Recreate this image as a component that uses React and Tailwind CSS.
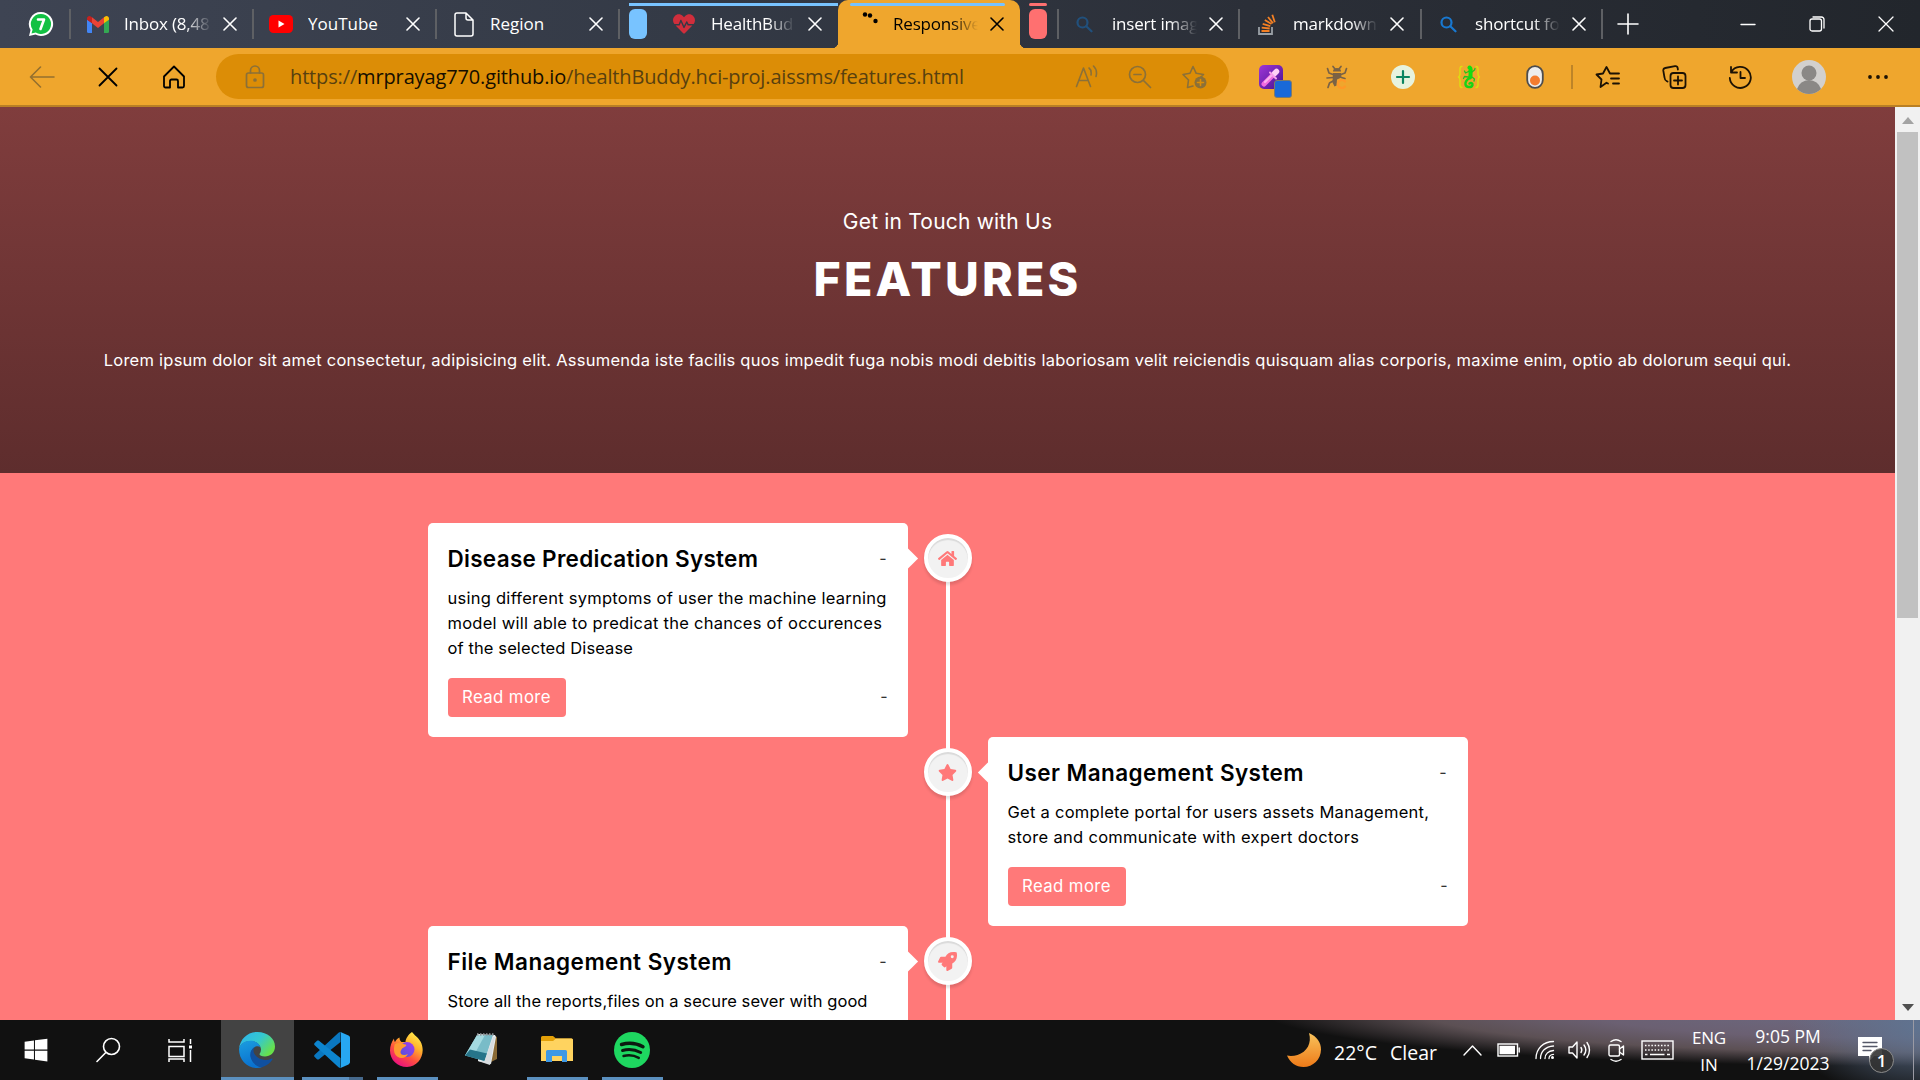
import React from "react";
import { FaHome, FaStar, FaRocket, FaHeartbeat, FaWindows } from "react-icons/fa";

const Svg = ({ w, h, vb, className = "", children, sw = 1.5 }) => (
  <svg
    width={w}
    height={h}
    viewBox={vb || `0 0 ${w} ${h}`}
    className={`shrink-0 ${className}`}
    fill="none"
    stroke="currentColor"
    strokeWidth={sw}
    strokeLinecap="round"
    strokeLinejoin="round"
  >
    {children}
  </svg>
);

/* ---------- tab strip ---------- */

const CloseIcon = ({ className = "" }) => (
  <Svg w={14} h={14} sw={1.6} className={className}>
    <path d="M1 1l12 12M13 1L1 13" />
  </Svg>
);

const WhatsApp = () => (
  <Svg w={26} h={26} className="ml-[28px]">
    <path d="M13 1a12 12 0 1 1-5.500 22.600L1 25l1.500-6A12 12 0 0 1 13 1z" fill="#fff" stroke="none" />
    <path d="M13 3a10 10 0 1 1-5.200 18.500L3.500 22.600l1.100-4A10 10 0 0 1 13 3z" fill="#12c143" stroke="none" />
    <path d="M10 8.500h6L12.500 18" stroke="#fff" strokeWidth="2.600" />
  </Svg>
);

const Gmail = () => (
  <Svg w={22} h={17} vb="0 0 22 17">
    <g stroke="none">
      <path d="M0 3.500L5 7v10H1.500A1.500 1.500 0 0 1 0 15.500z" fill="#4285f4" />
      <path d="M22 3.500L17 7v10h3.500a1.500 1.500 0 0 0 1.500-1.500z" fill="#34a853" />
      <path d="M5 1.300l6 4.700 6-4.700v6L11 12 5 7.300z" fill="#ea4335" />
      <path d="M0 2.500C0 .3 2.500-.7 4.200.7L5 1.300v6L0 3.700z" fill="#c5221f" />
      <path d="M22 2.500c0-2.200-2.500-3.200-4.200-1.800l-.8.6v6l5-3.600z" fill="#fbbc04" />
    </g>
  </Svg>
);

const YouTube = () => (
  <Svg w={24} h={18}>
    <rect width="24" height="18" rx="4.500" fill="#f00" stroke="none" />
    <path d="M9.500 5.500v7l6-3.500z" fill="#fff" stroke="none" />
  </Svg>
);

const FileIcon = () => (
  <Svg w={20} h={25} className="text-white">
    <path d="M3 1h9l7 7v14a2 2 0 0 1-2 2H3a2 2 0 0 1-2-2V3a2 2 0 0 1 2-2zM12 1v5a2 2 0 0 0 2 2h5" />
  </Svg>
);

const BingSearch = ({ className }) => (
  <Svg w={17} h={17} sw={2.2} className={className}>
    <circle cx="6.500" cy="6.500" r="5" />
    <path d="M10.300 10.300l5.200 5" />
  </Svg>
);

const StackOverflow = () => (
  <Svg w={18} h={21} vb="0 0 18 21">
    <path d="M1 13v7h13v-7" stroke="#9aa0a6" strokeWidth="1.800" strokeLinecap="butt" strokeLinejoin="miter" />
    <path d="M3.500 17h8M3.700 13.600l8 .9M4.700 9.900l7.600 2.300M6.800 6l6.700 4M10 3l5 6.200M14.300.8l2.500 7.500" stroke="#f48024" strokeWidth="1.800" strokeLinecap="butt" />
  </Svg>
);

const TabLabel = ({ children, className }) => (
  <span className={`overflow-hidden whitespace-nowrap text-[17px] leading-[24px] ${className}`}>{children}</span>
);
const fade = "tracking-[-0.2px] [mask-image:linear-gradient(to_right,#000_68%,transparent)]";

const TabStrip = () => (
  <div className="flex h-[48px] w-full shrink-0 items-center bg-[linear-gradient(to_right,#3e4453,#343a46_35%,#2b2f38_65%,#22262c)] text-white">
    <div className="flex h-[30px] w-[71px] items-center border-r-2 border-[#5e6064]"><WhatsApp /></div>
    <div className="flex h-[30px] w-[183px] items-center border-r-2 border-[#5e6064] pl-[16px]">
      <Gmail />
      <TabLabel className={`ml-[15px] w-[88px] ${fade}`}>Inbox (8,48</TabLabel>
      <CloseIcon className="ml-[11px]" />
    </div>
    <div className="flex h-[30px] w-[183px] items-center border-r-2 border-[#5e6064] pl-[15px]">
      <YouTube />
      <TabLabel className="ml-[15px] w-[86px]">YouTube</TabLabel>
      <CloseIcon className="ml-[12px]" />
    </div>
    <div className="flex h-[30px] w-[183px] items-center border-r-2 border-[#5e6064] pl-[17px]">
      <FileIcon />
      <TabLabel className="ml-[16px] w-[87px]">Region</TabLabel>
      <CloseIcon className="ml-[12px]" />
    </div>
    <div className="flex h-[48px] w-[218px] flex-col pl-[9px] pt-[3px]">
      <div className="h-[3px] bg-[#78c3ff]" />
      <div className="mt-[3px] flex h-[30px] items-center">
        <div className="h-[30px] w-[18px] rounded-[6px] bg-[#78c3ff]" />
        <FaHeartbeat className="ml-[26px] size-[22px] shrink-0 text-[#d02e3c]" />
        <TabLabel className={`ml-[16px] w-[84px] ${fade}`}>HealthBud</TabLabel>
        <CloseIcon className="ml-[13px]" />
      </div>
    </div>
    <div className="relative flex h-[48px] w-[182px] flex-col rounded-t-[10px] bg-[#efa62d] pt-[3px] text-black">
      <div className="absolute -left-[6px] bottom-0 size-[6px] bg-[radial-gradient(circle_at_0_0,transparent_6px,#efa62d_6.500px)]" />
      <div className="absolute -right-[6px] bottom-0 size-[6px] bg-[radial-gradient(circle_at_100%_0,transparent_6px,#efa62d_6.500px)]" />
      <div className="ml-[12px] h-[3px] w-[155px] rounded-full bg-[#78c3ff]" />
      <div className="mt-[3px] flex h-[30px] items-center pl-[24px]">
        <Svg w={17} h={24} className="text-black">
          <g fill="currentColor" stroke="none"><circle cx="3" cy="2.500" r="2.200" /><circle cx="8" cy="3.500" r="2.200" /><circle cx="13.500" cy="9" r="2.200" /></g>
        </Svg>
        <TabLabel className={`ml-[14px] w-[85px] ${fade}`}>Responsive</TabLabel>
        <CloseIcon className="ml-[12px]" />
      </div>
    </div>
    <div className="flex h-[48px] w-[37px] flex-col pl-[9px] pt-[3px]">
      <div className="h-[3px] w-[18px] rounded-full bg-[#ff7070]" />
      <div className="mt-[3px] h-[30px] w-[18px] rounded-[6px] bg-[#ff7070]" />
    </div>
    <div className="flex h-[30px] w-[181px] items-center border-l-2 border-[#5e6064] pl-[17px]">
      <BingSearch className="text-[#21507c]" />
      <TabLabel className={`ml-[19px] w-[85px] ${fade}`}>insert imag</TabLabel>
      <CloseIcon className="ml-[12px]" />
    </div>
    <div className="flex h-[30px] w-[182px] items-center border-l-2 border-[#5e6064] pl-[18px]">
      <StackOverflow />
      <TabLabel className={`ml-[17px] w-[85px] ${fade}`}>markdown</TabLabel>
      <CloseIcon className="ml-[12px]" />
    </div>
    <div className="flex h-[30px] w-[183px] items-center border-x-2 border-[#5e6064] pl-[18px]">
      <BingSearch className="text-[#1878d0]" />
      <TabLabel className={`ml-[18px] w-[85px] ${fade}`}>shortcut fo</TabLabel>
      <CloseIcon className="ml-[12px]" />
    </div>
    <Svg w={22} h={22} sw={1.6} className="ml-[14px]"><path d="M11 1v20M1 11h20" /></Svg>
    <Svg w={16} h={16} sw={1.4} className="ml-[101px]"><path d="M1 8.500h14" /></Svg>
    <Svg w={16} h={16} sw={1.3} className="ml-[53px]"><rect x="1" y="3" width="11.500" height="12" rx="2" /><path d="M4 1h8.500a2.500 2.500 0 0 1 2.500 2.500V12" /></Svg>
    <Svg w={16} h={16} sw={1.3} className="ml-[53px]"><path d="M1 1l14 14M15 1L1 15" /></Svg>
  </div>
);

/* ---------- toolbar ---------- */

const Toolbar = () => (
  <div className="flex h-[59px] w-full shrink-0 items-center border-b-2 border-[#b97f25] bg-[#efa62d] text-[#1c1204]">
    <Svg w={26} h={22} sw={1.6} className="ml-[29px] text-[#94702f]"><path d="M25 11H1.500M11.500 1L1.500 11l10 10" /></Svg>
    <Svg w={20} h={20} sw={1.8} className="ml-[43px] text-black"><path d="M1.500 1.500l17 17M18.500 1.500l-17 17" /></Svg>
    <Svg w={24} h={24} sw={1.8} className="ml-[44px] text-black">
      <path d="M2 11.500L12 1.500l10 10V21a1.500 1.500 0 0 1-1.500 1.500H16V16a1.500 1.500 0 0 0-1.500-1.500h-5A1.500 1.500 0 0 0 8 16v6.500H3.500A1.500 1.500 0 0 1 2 21z" />
    </Svg>
    <div className="ml-[30px] flex h-[45px] w-[1013px] items-center rounded-full bg-[#dc8d06] text-[#8b7038]">
      <Svg w={20} h={24} sw={1.7} className="ml-[29px]">
        <rect x="1.500" y="8" width="17" height="14.500" rx="2" /><path d="M5.500 8V5.500a4.500 4.500 0 0 1 9 0V8" /><circle cx="10" cy="15" r="1" fill="currentColor" />
      </Svg>
      <span className="ml-[25px] w-[679px] whitespace-nowrap text-[20px] tracking-[-0.14px] text-[#58400f]">
        https://<span className="text-[#150d00]">mrprayag770.github.io</span>/healthBuddy.hci-proj.aissms/features.html
      </span>
      <Svg w={23} h={24} sw={1.6} className="ml-[106px]">
        <path d="M1.500 21.500L8.500 3l7 18.500M4 15.500h9M14 3c2 1.500 2.500 4 2 7M18.500 1c3 3 3.500 7 2.500 10.500" />
      </Svg>
      <Svg w={24} h={24} sw={1.7} className="ml-[30px]"><circle cx="9.500" cy="9.500" r="8" /><path d="M15.500 15.500l7 7M6 9.500h7" /></Svg>
      <Svg w={27} h={26} sw={1.6} className="ml-[29px]">
        <path d="M12 22l-5.500 1.500 1-7.500L2 10.500l7-1.200L12 2.500l3.200 6.800 7.300 1.200-3 3" />
        <circle cx="19.500" cy="18.500" r="6" fill="currentColor" stroke="none" /><path d="M19.500 15.500v6M16.500 18.500h6" stroke="#dc8d06" />
      </Svg>
    </div>
    <div className="relative ml-[30px] size-[24px] rounded-[5px] bg-linear-to-br from-[#a035d8] to-[#4a1090]">
      <Svg w={24} h={24}><path d="M5 19l9-9" stroke="#f06be0" strokeWidth="5" /><path d="M6 17l8-8" stroke="#f9b3ee" strokeWidth="2" /><path d="M15.500 8.500l2-2" stroke="#ffd0f6" strokeWidth="5.500" /><path d="M11 7.500l6 6" stroke="#f7a0ec" strokeWidth="2" /></Svg>
      <div className="absolute left-[15px] top-[15px] size-[18px] rounded-[3px] border border-[#7d7a6a] bg-[#1a69d8]" />
    </div>
    <Svg w={22} h={24} sw={1.7} className="ml-[43px] text-[#7a6245]">
      <path d="M7 1.500l2 2.500M15 1.500l-2 2.500" />
      <path d="M7 6.500a4 3.500 0 0 1 8 0z" fill="currentColor" stroke="none" />
      <path d="M7 8h8l.5 4.500-4.500 2-.5 6-2 1-2-4z" fill="currentColor" stroke="none" />
      <path d="M7 9.500L3 8 1.500 3.500M15 9.500L19 8l1.500-4.500M7 12.500l-6 .5M15.500 12.500l3.500 1M7 16l-3.500 2L2 22.500" />
      <path d="M19 16.500a4 4 0 1 0 0 5" stroke="#ff9827" strokeWidth="2.200" />
    </Svg>
    <Svg w={24} h={24} className="ml-[43px]"><circle cx="12" cy="12" r="12" fill="#e7f3de" stroke="none" /><path d="M12 6v12M6 12h12" stroke="#0c8560" strokeWidth="2.200" /></Svg>
    <Svg w={24} h={24} className="ml-[42px]">
      <path d="M5 1.500C3.500 1.500 3 2.500 3 4v5c0 2-.5 2.500-1.500 3C2.500 12.500 3 13 3 15v5c0 1.500.5 2.500 2 2.500M19 1.500c1.500 0 2 1 2 2.500v5c0 2 .5 2.500 1.500 3-1 .5-1.500 1-1.500 3v5c0 1.500-.5 2.500-2 2.500" stroke="#dede10" strokeWidth="1.400" />
      <path d="M12.500 2.500c0 0 1.500 1 1 3" stroke="#10e010" strokeWidth="4" />
      <path d="M13.500 6.500c0 2.500.5 3.500-.5 6" stroke="#10e010" strokeWidth="4" />
      <path d="M12.500 13c-3 2-4.500 4-4 6.500.5 3 6 3.500 7 .5.300-1.800-1.500-2.500-3-1.500" stroke="#16d416" strokeWidth="2.400" />
      <path d="M11.500 6.500L8.500 8 7.500 6M15 7l2.500-2 .5-1.500M11 12l-3.500-.5-1 2M15 12l2.500 2-.500 2" stroke="#22c51c" strokeWidth="1.300" />
    </Svg>
    <Svg w={18} h={24} className="ml-[45px]"><rect x="1.200" y="1.200" width="15.600" height="21.600" rx="7.800" fill="#ededed" stroke="#4d4d4d" strokeWidth="1.800" /><circle cx="9" cy="15.500" r="5" fill="#f47c2e" stroke="none" /></Svg>
    <div className="ml-[27px] h-[24px] w-[2px] bg-[#bd8428]" />
    <Svg w={25} h={24} sw={1.8} className="ml-[22px]">
      <path d="M13 18.500l-1.500-.8-6 4.300 1-7.500L1.500 9.500 8 8.500l3.500-6.500L15 8.500h9M16 13.500h8M18 18.500h6" />
    </Svg>
    <Svg w={25} h={24} sw={1.8} className="ml-[42px]">
      <rect x="8.500" y="8" width="15" height="15" rx="3" /><path d="M16 11.500v8M12 15.500h8" /><path d="M5.500 16.500l-1-.5C3 15.500 2.700 14 2.500 12.500L1.300 5.700c-.2-1.400.5-2.400 1.900-2.700L13 1.200c1.400-.2 2.500.7 2.700 2l.2 1.300" />
    </Svg>
    <Svg w={25} h={24} sw={1.8} className="ml-[41px]">
      <path d="M3 2v5.500h6M3.300 7A10.500 10.500 0 1 1 1.800 13" /><path d="M12.500 7v6H17" />
    </Svg>
    <Svg w={34} h={34} className="ml-[39px]">
      <circle cx="17" cy="17" r="17" fill="#d2d0ce" stroke="none" /><circle cx="17" cy="13" r="7.500" fill="#8a8886" stroke="none" /><path d="M5 29a12.500 12.500 0 0 1 24 0 17 17 0 0 1-24 0z" fill="#8a8886" stroke="none" />
    </Svg>
    <Svg w={22} h={6} className="ml-[41px]"><g fill="#1c1204" stroke="none"><circle cx="3" cy="3" r="1.900" /><circle cx="11" cy="3" r="1.900" /><circle cx="19" cy="3" r="1.900" /></g></Svg>
  </div>
);

/* ---------- web page ---------- */

const Badge = ({ Icon }) => (
  <div className="z-10 flex size-[48px] items-center justify-center rounded-full border-4 border-white bg-[#f2f2f2] text-[19px] text-[#ff7979] shadow-[0_3px_3px_rgba(0,0,0,0.12),inset_0_2px_1px_rgba(0,0,0,0.10)]">
    <Icon />
  </div>
);

const Card = ({ title, lines, right, titleClass }) => (
  <div className="relative w-[480px] rounded-[5px] bg-white p-[20px] text-black">
    <div className={`absolute top-[28px] size-[15px] rotate-45 bg-white ${right ? "-left-[7px]" : "-right-[7px]"}`} />
    <div className="flex h-[33px] items-center justify-between">
      <h2 className={`pb-[2px] text-[22.500px] font-semibold leading-[31px] ${titleClass}`}>{title}</h2>
      <span className="pb-[2px] pr-px text-[16px] leading-[31px] text-[#333]">-</span>
    </div>
    <p className="mt-[10px] text-[16.500px] leading-[25px]">
      {lines.map(([text, cls]) => (
        <span key={text} className={`block whitespace-nowrap ${cls}`}>{text}</span>
      ))}
    </p>
    <div className="mt-[17px] flex h-[39px] items-center justify-between">
      <a className="flex h-[39px] w-[118px] items-center justify-center rounded-[4px] bg-[#ff7979] text-[16.750px] leading-[25px] tracking-[0.380px] text-white">Read more</a>
      <span className="pb-[3px] text-[16px] text-[#333]">-</span>
    </div>
  </div>
);

const Row = ({ first, right, Icon, ...card }) => (
  <div className={`flex w-[1040px] ${right ? "flex-row-reverse" : ""}`}>
    <Card right={right} {...card} />
    <div className="relative flex w-[80px] flex-col items-center pt-[11px]">
      <div className={`absolute bottom-0 left-[38px] w-[4px] bg-white ${first ? "top-[30px]" : "top-0"}`} />
      <Badge Icon={Icon} />
    </div>
  </div>
);

const Page = () => (
  <div className="h-[913px] w-[1895px] overflow-hidden bg-[#ff7979] font-['Inter',sans-serif]">
    <header className="flex h-[366px] flex-col items-center bg-linear-to-b from-[#803d3d] to-[#5e2d2d] pt-[100px] text-center text-white">
      <p className="text-[21px] leading-[30px] tracking-[0.190px]">Get in Touch with Us</p>
      <h1 className="mt-[12px] text-[46.500px] font-extrabold leading-[60px] tracking-[3.200px]">FEATURES</h1>
      <p className="mt-[39px] whitespace-nowrap text-[16.500px] leading-[24px] tracking-[0.245px]">
        Lorem ipsum dolor sit amet consectetur, adipisicing elit. Assumenda iste facilis quos impedit fuga nobis modi debitis laboriosam velit reiciendis quisquam alias corporis, maxime enim, optio ab dolorum sequi qui.
      </p>
    </header>
    <main className="flex flex-col items-center pt-[50px]">
      <Row
        first
        Icon={FaHome}
        title="Disease Predication System"
        titleClass="tracking-[0.290px]"
        lines={[
          ["using different symptoms of user the machine learning", "tracking-[0.257px]"],
          ["model will able to predicat the chances of occurences", "tracking-[0.255px]"],
          ["of the selected Disease", "tracking-[0.110px]"],
        ]}
      />
      <Row
        right
        Icon={FaStar}
        title="User Management System"
        titleClass="tracking-[0.430px]"
        lines={[
          ["Get a complete portal for users assets Management,", "tracking-[0.265px]"],
          ["store and communicate with expert doctors", "tracking-[0.310px]"],
        ]}
      />
      <Row
        Icon={FaRocket}
        title="File Management System"
        titleClass="tracking-[0.470px]"
        lines={[["Store all the reports,files on a secure sever with good", "tracking-[0.080px]"]]}
      />
    </main>
  </div>
);

const Scrollbar = () => (
  <div className="flex h-[913px] w-[25px] flex-col items-center bg-[#f1f1f1]">
    <Svg w={12} h={7} className="mt-[10px]"><path d="M6 0l6 7H0z" fill="#a3a3a3" stroke="none" /></Svg>
    <div className="mt-[8px] h-[486px] w-[21px] bg-[#c1c1c1]" />
    <Svg w={12} h={7} className="mb-[9px] mt-auto"><path d="M6 7l6-7H0z" fill="#505050" stroke="none" /></Svg>
  </div>
);

/* ---------- taskbar ---------- */

const Edge = () => (
  <Svg w={36} h={36} vb="0 0 36 36">
    <defs>
      <linearGradient id="edgeTop" x1="0" y1="0" x2="1" y2="0.600"><stop offset="0" stopColor="#2cb2f0" /><stop offset="0.550" stopColor="#35c8cf" /><stop offset="1" stopColor="#68e04a" /></linearGradient>
      <linearGradient id="edgeLow" x1="0" y1="0" x2="0.300" y2="1"><stop offset="0" stopColor="#1b9de0" /><stop offset="1" stopColor="#0a72cf" /></linearGradient>
    </defs>
    <g stroke="none">
      <path d="M0 17C1 7 8.500 0 18.500 0 28.500 0 36 6.500 36 14.500 36 21 31 24.500 26 24.500c-3.500 0-5.500-1-5.500-2.200 0-1 1.500-1.800 1.500-4.800C22 13 17 9 11.500 9 5 9 1 13 0 17z" fill="url(#edgeTop)" />
      <path d="M0 17C1 12 5.500 8.800 11.500 8.800c5 0 9 3 10 6.200-5-2.500-9.500 2-9.500 7 0 7 5 12.500 11 13.200-1.500.500-3.200.8-5 .8C8 36 0 28 0 17z" fill="url(#edgeLow)" />
      <path d="M16.500 14.800C12 17 10.500 21 11.500 25c1.500 6 6.500 10 11.500 10.200 5-1.500 8.500-4.700 10.500-8 .3-.6-.2-1-.8-.7-2 1-4 1.500-6 1.500-7 0-12-5-12.200-9 0-1.800.8-3.200 2-4.200z" fill="#10509f" />
    </g>
  </Svg>
);

const VSCode = () => (
  <Svg w={36} h={36} vb="0 0 36 36">
    <g stroke="none">
      <path d="M26.500 0v10L5 27.200c-.6.500-1.400.4-2 0L.7 25c-.7-.6-.7-1.500 0-2.200L24.500.8c.6-.5 1.300-.8 2-.8z" fill="#0a77c0" />
      <path d="M26.500 36V26L5 8.800c-.6-.5-1.400-.4-2 0L.7 11c-.7.600-.7 1.500 0 2.200l23.800 22c.6.500 1.300.8 2 .8z" fill="#0d85cf" />
      <path d="M26.500 0l8 3.600c1 .5 1.500 1.300 1.500 2.300v24.200c0 1-.5 1.800-1.500 2.300l-8 3.600c.5-.5.500-1 .5-2V2c0-1-.2-1.500-.5-2z" fill="#27a7f2" />
    </g>
  </Svg>
);

const Firefox = () => (
  <Svg w={34} h={35} vb="0 0 34 35">
    <defs>
      <linearGradient id="fox" x1="0.850" y1="0" x2="0.250" y2="1"><stop offset="0" stopColor="#fff44f" /><stop offset="0.350" stopColor="#ffb22c" /><stop offset="0.650" stopColor="#ff4f40" /><stop offset="1" stopColor="#e90a86" /></linearGradient>
      <linearGradient id="globe" x1="1" y1="0" x2="0" y2="1"><stop offset="0" stopColor="#a63af0" /><stop offset="1" stopColor="#4a55dc" /></linearGradient>
    </defs>
    <g stroke="none">
      <path d="M22 0c2 3 6 5 8.500 9.500 6 11-1 25.500-13.500 25.500C7.500 35 0 28 0 18.500 0 14 1.500 10 4 6.500c0 2 .5 3 1 3.500C6 8 7.500 6 9.500 5.500c0 2 .5 3 2 4.500h4c0-3 3-8 6.500-10z" fill="url(#fox)" />
      <circle cx="17" cy="17.500" r="7.500" fill="url(#globe)" />
      <path d="M5 12c4-2 7-.5 10 .5 1 0 1.800.6 1 1.500-2 1.800-4 2-4.500 3.500C8 23 14 24 18 22c-3 6-11 5-13.500-1C3.500 18 4 14 5 12z" fill="#ff9a30" />
    </g>
  </Svg>
);

const Notepad = () => (
  <Svg w={33} h={33} vb="0 0 33 33">
    <g stroke="none">
      <path d="M30 3l2 1v22l-6 3z" fill="#8a6a35" />
      <path d="M13 1l17 1 1 2-5 27-13-3z" fill="#e9eef0" />
      <path d="M12 2h16L19.500 28 0 22.500z" fill="#79bcc8" />
      <path d="M12 2h8L9 22l-9 .5z" fill="#a4dae0" />
      <path d="M0 22.500l5-6 17 4-2.500 7.500z" fill="#27758a" />
      <path d="M19.500 28L28 4l2 0-5 28-12-4z" fill="#d8dde0" />
    </g>
    <path d="M12 1.500h18" stroke="#8e969a" strokeDasharray="1.500 1.500" strokeWidth="2.500" strokeLinecap="butt" />
  </Svg>
);

const Folder = () => (
  <Svg w={32} h={28} vb="0 0 32 28">
    <g stroke="none">
      <path d="M0 1.500A1.500 1.500 0 0 1 1.500 0H12l3 2.500h15.500A1.500 1.500 0 0 1 32 4v6H0z" fill="#e3a008" />
      <path d="M0 5h12l3-2.500h15.500A1.500 1.500 0 0 1 32 4v21H0z" fill="#ffd35f" />
      <path d="M5 26V15.500A1.500 1.500 0 0 1 6.500 14h18a1.500 1.500 0 0 1 1.500 1.500V26h-5v-6H11v6z" fill="#3e98e4" />
    </g>
  </Svg>
);

const Spotify = () => (
  <Svg w={36} h={36} vb="0 0 36 36">
    <circle cx="18" cy="18" r="18" fill="#1ed760" stroke="none" />
    <g stroke="#0c1a10">
      <path d="M7.500 12.500c7-2 15-1.300 21.500 2.200" strokeWidth="3.400" />
      <path d="M8.500 18.500c6-1.700 12.500-1 18.200 2.100" strokeWidth="2.900" />
      <path d="M9.500 24c5-1.300 10.500-.8 15.300 1.900" strokeWidth="2.400" />
    </g>
  </Svg>
);

const TaskApp = ({ children, tile = "", bar = "bg-[#5b90bf]" }) => (
  <div className={`flex h-[60px] flex-col items-center justify-between ${tile}`}>
    <div className="flex h-[57px] items-center pr-[2px] pt-[2px]">{children}</div>
    <div className={`h-[3px] w-full ${bar}`} />
  </div>
);

const Taskbar = () => (
  <div className="flex h-[60px] w-full shrink-0 items-center bg-[#111] bg-[radial-gradient(ellipse_130px_75px_at_1920px_6px,#5f7390_0%,transparent_100%),radial-gradient(ellipse_640px_56px_at_1900px_-10px,#6c6b84_0%,#6b6072_50%,#5c5054_75%,#11111100_100%)] text-white">
    <FaWindows className="ml-[23px] size-[26px] shrink-0" />
    <Svg w={25} h={26} sw={1.6} className="ml-[47px]"><circle cx="15.500" cy="9.500" r="8" /><path d="M9.800 15.500L1 24.500" /></Svg>
    <Svg w={25} h={25} sw={1.5} className="ml-[47px]">
      <path d="M1 1v3h15V1M1 8.500h15v10H1zM1 24v-3h15v3M22.500 1v5M22.500 12v12" strokeLinecap="butt" strokeLinejoin="miter" /><rect x="21" y="7.500" width="3" height="3" fill="#fff" stroke="none" />
    </Svg>
    <div className="ml-[28px] flex">
      <TaskApp tile="w-[73px] bg-[#434343]"><Edge /></TaskApp>
      <TaskApp tile="ml-[8px] w-[61px]" bar="bg-[linear-gradient(to_right,#5b90bf_47px,#46698c_47px)]"><VSCode /></TaskApp>
      <TaskApp tile="ml-[14px] w-[61px]"><Firefox /></TaskApp>
      <TaskApp tile="ml-[14px] w-[61px]" bar=""><Notepad /></TaskApp>
      <TaskApp tile="ml-[14px] w-[61px]"><Folder /></TaskApp>
      <TaskApp tile="ml-[14px] w-[61px]"><Spotify /></TaskApp>
    </div>
    <Svg w={34} h={34} className="ml-[624px]">
      <defs><linearGradient id="moon" x1="0" y1="0" x2="0" y2="1"><stop offset="0" stopColor="#f8c35c" /><stop offset="1" stopColor="#ee7a18" /></linearGradient></defs>
      <path d="M22 0c8 3.500 12 9.500 12 16.500C34 26.500 26 34 16.500 34 9 34 3 29.500 0 22.500c3 .8 7 .5 10.500-.5C20 19 25 10 22 0z" fill="url(#moon)" stroke="none" />
    </Svg>
    <span className="ml-[13px] w-[56px] pt-[5px] text-[19.500px]">22°C</span>
    <span className="w-[60px] pt-[5px] text-[19.500px]">Clear</span>
    <Svg w={19} h={11} sw={1.4} className="ml-[13px]"><path d="M1 10l8.500-9L18 10" /></Svg>
    <Svg w={23} h={14} sw={1.4} className="ml-[15px]"><rect x="1" y="1" width="19.500" height="12" strokeLinejoin="miter" /><rect x="2.500" y="2.800" width="15.500" height="8.500" fill="#fff" stroke="none" /><path d="M22.200 5v4" /></Svg>
    <Svg w={20} h={20} sw={1.3} className="ml-[15px]"><path d="M1 18.500C1 8.500 8.500 1.500 18.500 1.500M5.500 18.500c0-7 5-12 13-12.500M10 18.500c0-4.500 3.500-7.500 8.500-8M14 18.500c0-2.500 2-4 4.500-4.200" /><circle cx="17.500" cy="17.500" r="1.500" fill="#fff" stroke="none" /></Svg>
    <Svg w={23} h={20} sw={1.4} className="ml-[13px]"><path d="M1 7h3.500L9 2v16l-4.500-5H1zM13 7.500c1 1.500 1 3.500 0 5M16 5c2.200 3 2.200 7 0 10M19 2.500c3.300 4.500 3.300 10.500 0 15" /></Svg>
    <Svg w={17} h={23} sw={1.4} className="ml-[17px]"><rect x="1" y="6" width="10.500" height="11" rx="1.500" /><path d="M11.500 10l4-3v9l-4-3M3 2.500c3-2 7-2 10 0M3 20.500c3 2 7 2 10 0" /></Svg>
    <Svg w={33} h={20} sw={1.4} className="ml-[16px]"><rect x="1" y="1" width="31" height="18" strokeLinejoin="miter" /><path d="M4 5.500h25M4 10h25" strokeDasharray="1.500 1.700" strokeLinecap="butt" /><path d="M4 14.500h2.500M9 14.500h14.500M26 14.500h3" strokeLinecap="butt" /></Svg>
    <div className="ml-[14px] flex w-[42px] flex-col items-center pt-px text-[17px] leading-[27px]"><span className="tracking-[-0.150px]">ENG</span><span>IN</span></div>
    <div className="ml-[13px] flex w-[90px] flex-col items-center whitespace-nowrap text-[17.500px] leading-[27px]"><span>9:05 PM</span><span>1/29/2023</span></div>
    <div className="relative ml-[25px] h-[26px] w-[24px]">
      <Svg w={24} h={26}><path d="M0 0h24v19h-8l-5 6v-6H0z" fill="#fff" stroke="none" /><path d="M5 5.500h14M5 9.500h14M5 13.500h8" stroke="#555868" strokeWidth="1.300" /></Svg>
      <div className="absolute left-[11px] top-[11px] flex size-[25px] items-center justify-center rounded-full border border-[#8c8c8c] bg-[#333]/90 text-[17px] font-semibold">1</div>
    </div>
    <div className="ml-[31px] h-full w-px bg-[#9a9aa4]" />
  </div>
);

export default function App() {
  return (
    <div className="flex h-[1080px] w-[1920px] flex-col overflow-hidden font-['Open_Sans','Noto_Sans',sans-serif]">
      <TabStrip />
      <Toolbar />
      <div className="flex h-[913px] shrink-0"><Page /><Scrollbar /></div>
      <Taskbar />
    </div>
  );
}
